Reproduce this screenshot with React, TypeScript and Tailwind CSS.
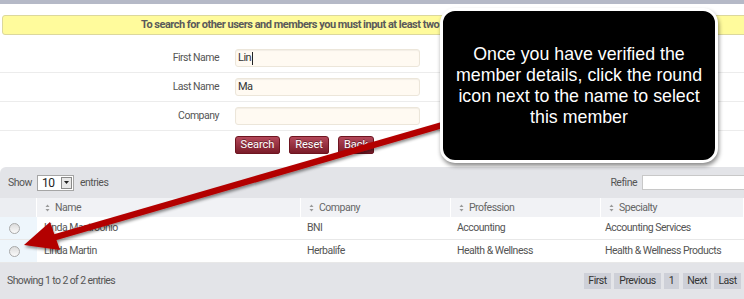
import React from 'react'

function SortIcon() {
    return (
        <svg width="5" height="8" viewBox="0 0 5 8" className="mr-[5px] inline-block">
            <path d="M2.5 0.5 L4.5 3 L0.5 3 Z" fill="#999" />
            <path d="M2.5 7.5 L4.5 5 L0.5 5 Z" fill="#999" />
        </svg>
    )
}

function Radio() {
    return (
        <span className="block h-[11px] w-[11px] rounded-full border border-[#a9a9a9] bg-gradient-to-b from-[#dcdcdc] to-[#fafafa]" />
    )
}

function FormRow({ label, value, caret }: { label: string; value: string; caret?: boolean }) {
    return (
        <div className="flex h-[29px] items-center border-b border-[#ececec]">
            <div className="w-[220px] pr-[1px] text-right text-[10.5px] text-[#555]">{label}</div>
            <div className="ml-[15px] flex h-[18px] w-[185px] items-center rounded-[3px] border border-[#ece6da] bg-[#fffaf2] px-[2px] text-[11px] text-[#333] shadow-[inset_0_1px_1px_rgba(0,0,0,0.05)]">
                {value}
                {caret && <span className="ml-[1px] h-[13px] w-[1px] bg-[#222]" />}
            </div>
        </div>
    )
}

function RedButton({ label, width }: { label: string; width: string }) {
    return (
        <div
            className={`${width} flex h-[18px] items-center justify-center rounded-t-[3px] rounded-b-[2px] border border-[#6e1520] bg-gradient-to-b from-[#b4485a] to-[#7b1b29] text-[11px] text-white [text-shadow:0_-1px_0_rgba(0,0,0,0.4)]`}
        >
            {label}
        </div>
    )
}

const rows = [
    { name: 'Linda Mastroonio', company: 'BNI', profession: 'Accounting', specialty: 'Accounting Services' },
    { name: 'Linda Martin', company: 'Herbalife', profession: 'Health & Wellness', specialty: 'Health & Wellness Products' },
]

export default function App() {
    return (
        <div className="relative h-[299px] w-[744px] overflow-hidden bg-white font-['Roboto','Liberation_Sans',sans-serif] tracking-[-0.5px]">
            <div className="h-[4px] bg-[#b5b9c7]" />

            {/* notice */}
            <div className="ml-[2px] mr-[-10px] mt-[11px] flex h-[20px] items-center rounded-[3px] border border-[#dcd89c] bg-[#fffb9c] pl-[138px] text-[11px] font-bold text-[#5a5a5a]">
                To search for other users and members you must input at least two characters
            </div>

            {/* search form */}
            <div className="mt-[9px]">
                <FormRow label="First Name" value="Lin" caret />
                <FormRow label="Last Name" value="Ma" />
                <FormRow label="Company" value="" />
                <div className="flex h-[36px] items-start gap-[9px] pl-[235px] pt-[5px] tracking-normal">
                    <RedButton label="Search" width="w-[45px]" />
                    <RedButton label="Reset" width="w-[40px]" />
                    <RedButton label="Back" width="w-[36px]" />
                </div>
            </div>

            {/* results table */}
            <div className="h-[133px] rounded-tl-[6px] bg-[#e3e4e8] text-[10.5px] text-[#555]">
                <div className="flex h-[31px] items-center justify-between pl-[8px]">
                    <div className="flex items-center">
                        <span>Show</span>
                        <div className="ml-[5px] flex h-[16px] w-[37px] items-center justify-between border border-[#a5a5a5] bg-white pl-[4px] pr-[1px]">
                            <span className="text-[12px] text-[#222]">10</span>
                            <span className="flex h-[12px] w-[11px] items-center justify-center border border-[#8a8a8a] bg-[#e8e8e8]">
                                <svg width="5" height="3" viewBox="0 0 5 3">
                                    <path d="M0 0 L5 0 L2.5 3 Z" fill="#222" />
                                </svg>
                            </span>
                        </div>
                        <span className="ml-[6px]">entries</span>
                    </div>
                    <div className="flex items-center">
                        <span>Refine</span>
                        <div className="ml-[5px] mr-[-2px] h-[15px] w-[104px] border border-[#c8c8c8] bg-white" />
                    </div>
                </div>

                <div className="grid grid-cols-[37px_264px_150px_150px_143px]">
                    <div className="h-[19px] border-r border-white bg-[#eceef2]" />
                    {['Name', 'Company', 'Profession', 'Specialty'].map((h) => (
                        <div
                            key={h}
                            className="flex h-[19px] items-center border-r border-white bg-[#f1f2f5] pl-[8px] text-[#666]"
                        >
                            <SortIcon />
                            {h}
                        </div>
                    ))}
                    {rows.map((r) => (
                        <React.Fragment key={r.name}>
                            <div className="flex h-[23px] items-center border-b border-[#e8e8e8] bg-[#eef6fc] pl-[9px]">
                                <Radio />
                            </div>
                            <div className="flex h-[23px] items-center border-b border-[#e8e8e8] bg-white pl-[7px]">{r.name}</div>
                            <div className="flex h-[23px] items-center border-b border-[#e8e8e8] bg-white pl-[6px]">{r.company}</div>
                            <div className="flex h-[23px] items-center border-b border-[#e8e8e8] bg-white pl-[6px]">{r.profession}</div>
                            <div className="flex h-[23px] items-center border-b border-[#e8e8e8] bg-white pl-[4px]">{r.specialty}</div>
                        </React.Fragment>
                    ))}
                </div>

                <div className="flex items-center justify-between pl-[7px] pr-[3px] pt-[10px]">
                    <span className="tracking-[-0.6px]">Showing 1 to 2 of 2 entries</span>
                    <div className="flex gap-[3px] text-[#333]">
                        <span className="flex h-[16px] w-[27px] items-center justify-center bg-[#ced0d8]">First</span>
                        <span className="flex h-[16px] w-[47px] items-center justify-center bg-[#ced0d8]">Previous</span>
                        <span className="flex h-[16px] w-[15px] items-center justify-center bg-[#ced0d8]">1</span>
                        <span className="ml-[1px] flex h-[16px] w-[28px] items-center justify-center bg-[#ced0d8]">Next</span>
                        <span className="flex h-[16px] w-[27px] items-center justify-center bg-[#ced0d8]">Last</span>
                    </div>
                </div>
            </div>

            {/* annotation arrow */}
            <svg className="absolute left-0 top-0" width="744" height="299" viewBox="0 0 744 299">
                <defs>
                    <filter id="sh" x="-10%" y="-10%" width="120%" height="140%">
                        <feDropShadow dx="1" dy="2" stdDeviation="1.5" floodColor="#000" floodOpacity="0.45" />
                    </filter>
                </defs>
                <g filter="url(#sh)" fill="#b30000">
                    <path d="M445 121 L446.8 127 L55 240.5 L53.2 234.5 Z" />
                    <path d="M24 245 L50 222 L60 250 Z" />
                </g>
            </svg>

            {/* callout */}
            <div className="absolute left-[440px] top-[8px] flex h-[155px] w-[278px] items-start justify-center rounded-[15px] border-[3px] border-white bg-black pt-[33px] font-['Liberation_Sans',Arial,sans-serif] tracking-normal shadow-[1px_3px_4px_rgba(0,0,0,0.45)]">
                <p className="text-center text-[17.8px] leading-[21px] text-white">
                    Once you have verified the
                    <br />
                    member details, click the round
                    <br />
                    icon next to the name to select
                    <br />
                    this member
                </p>
            </div>
        </div>
    )
}
